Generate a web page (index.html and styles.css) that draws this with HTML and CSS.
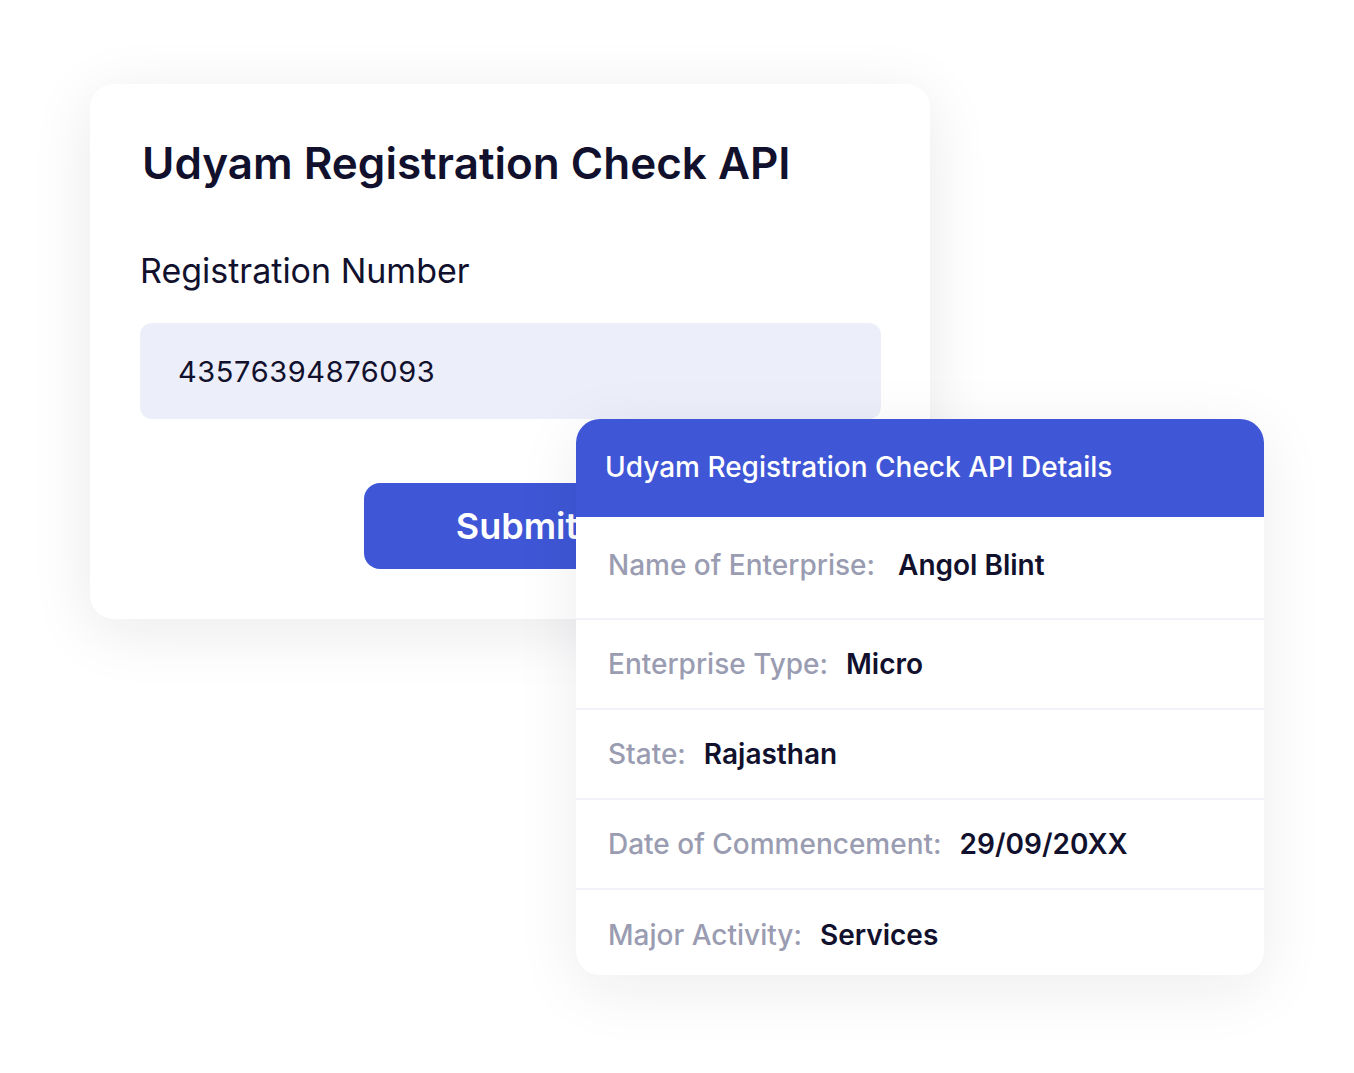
FILE: index.html
```html
<!DOCTYPE html>
<html>
<head>
    <meta charset="utf-8">
    <title>Udyam Registration Check API</title>
    <link rel="stylesheet" href="styles.css">
</head>
<body>
    <div class="stage">
        <div class="form-card">
            <h1>Udyam Registration Check API</h1>
            <label class="field-label">Registration Number</label>
            <div class="field-input">43576394876093</div>
            <button class="submit-btn">Submit</button>
        </div>

        <div class="result-card">
            <div class="result-head">Udyam Registration Check API Details</div>
            <div class="result-row row-first">
                <span class="label">Name of Enterprise:</span>
                <span class="value">Angol Blint</span>
            </div>
            <div class="result-row">
                <span class="label">Enterprise Type:</span>
                <span class="value">Micro</span>
            </div>
            <div class="result-row">
                <span class="label">State:</span>
                <span class="value">Rajasthan</span>
            </div>
            <div class="result-row">
                <span class="label">Date of Commencement:</span>
                <span class="value">29/09/20XX</span>
            </div>
            <div class="result-row row-last">
                <span class="label">Major Activity:</span>
                <span class="value">Services</span>
            </div>
        </div>
    </div>
</body>
</html>
```

FILE: styles.css
```css
body {
    margin: 0;
    background: #fff;
    font-family: Inter, "Noto Sans", Arial, sans-serif;
    color: #11112e;
}

.stage {
    position: relative;
    width: 1354px;
    height: 1073px;
    overflow: hidden;
}

/* left card - the form */
.form-card {
    position: absolute;
    left: 90px;
    top: 84px;
    width: 840px;
    height: 535px;
    box-sizing: border-box;
    padding: 52px 50px 0 50px;
    background: #fff;
    border-radius: 24px;
    box-shadow: 0 12px 64px rgba(20, 20, 40, 0.09);
    display: flex;
    flex-direction: column;
    align-items: flex-start;
}

.form-card h1 {
    margin: 0 0 0 2px;
    font-size: 44px;
    line-height: 54px;
    font-weight: 600;
    color: #11112e;
}

.field-label {
    margin-top: 60px;
    font-size: 34px;
    line-height: 42px;
    font-weight: 400;
    color: #11112e;
}

.field-input {
    margin-top: 31px;
    width: 741px;
    height: 96px;
    box-sizing: border-box;
    padding-left: 38px;
    display: flex;
    align-items: center;
    background: #eceef9;
    border-radius: 12px;
    font-size: 29px;
    letter-spacing: 0.6px;
    color: #11112e;
}

.submit-btn {
    margin-top: 64px;
    margin-left: 224px;
    width: 306px;
    height: 86px;
    border: none;
    border-radius: 16px;
    background: #3f57d6;
    color: #fff;
    font-family: inherit;
    font-size: 36px;
    font-weight: 600;
    cursor: pointer;
}

/* right card - the result */
.result-card {
    position: absolute;
    left: 576px;
    top: 419px;
    width: 688px;
    height: 556px;
    background: #fff;
    border-radius: 24px;
    box-shadow: 0 14px 64px rgba(20, 20, 40, 0.08);
    display: flex;
    flex-direction: column;
    overflow: hidden;
}

.result-head {
    height: 98px;
    flex-shrink: 0;
    box-sizing: border-box;
    padding-left: 29px;
    padding-bottom: 2px;
    display: flex;
    align-items: center;
    background: #3f57d6;
    color: #fff;
    font-size: 28px;
    font-weight: 500;
}

.result-row {
    height: 90px;
    box-sizing: border-box;
    padding-left: 32px;
    display: flex;
    align-items: center;
    gap: 18px;
    border-top: 2px solid #f2f3fa;
    font-size: 28px;
}

.result-row.row-first {
    height: 101px;
    border-top: none;
    gap: 23px;
    padding-bottom: 6px;
}

.result-row.row-last {
    flex: 1;
    padding-top: 4px;
}

.result-row .label {
    color: #9a9cb1;
    font-weight: 500;
}

.result-row .value {
    color: #11112e;
    font-weight: 600;
}
```
